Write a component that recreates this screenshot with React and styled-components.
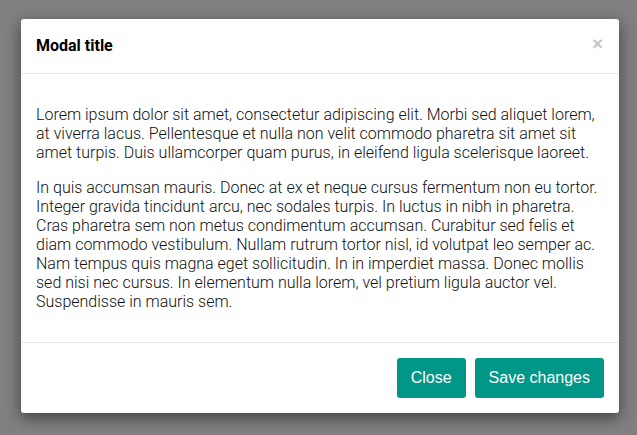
import React from "react";
import styled, { createGlobalStyle } from "styled-components";

const Global = createGlobalStyle`
  html, body { margin: 0; padding: 0; }
  body {
    background: #808080;
    font-family: Roboto, "Noto Sans", sans-serif;
    height: 435px;
    overflow: hidden;
  }
`;

const Backdrop = styled.div`
  display: flex;
  align-items: flex-start;
  padding: 19px 0 0 21px;
`;

const Modal = styled.div`
  width: 598px;
  background: #fff;
  border-radius: 3px;
  box-shadow: 0 5px 15px rgba(0, 0, 0, 0.5);
  display: flex;
  flex-direction: column;
`;

const Header = styled.div`
  display: flex;
  align-items: flex-start;
  justify-content: space-between;
  padding: 15px;
  border-bottom: 1px solid #e5e5e5;
`;

const Title = styled.h4`
  margin: 0;
  font-family: Roboto, sans-serif;
  font-size: 16px;
  font-weight: 700;
  line-height: 24px;
  color: #000;
`;

const CloseX = styled.button`
  border: 0;
  background: none;
  padding: 0;
  margin: 0 1px 0 0;
  font-family: "Liberation Sans", Arial, sans-serif;
  font-size: 19px;
  font-weight: 700;
  line-height: 20px;
  color: #c6c6c6;
  cursor: pointer;
`;

const Body = styled.div`
  padding: 31px 15px;
`;

const Para = styled.p`
  margin: 0 0 16px;
  font-family: Roboto, sans-serif;
  font-size: 16px;
  font-weight: 300;
  line-height: 19px;
  color: #111;
  &:last-child { margin-bottom: 0; }
`;

const Footer = styled.div`
  display: flex;
  justify-content: flex-end;
  gap: 9px;
  padding: 15px;
  border-top: 1px solid #e5e5e5;
`;

const Button = styled.button`
  height: 40px;
  padding: 0 14px;
  border: 0;
  border-radius: 3px;
  background: #009688;
  color: #fff;
  font-family: "Liberation Sans", Arial, sans-serif;
  font-size: 16px;
  cursor: pointer;
`;

export default function App() {
  return (
    <>
      <Global />
      <Backdrop>
        <Modal>
          <Header>
            <Title>Modal title</Title>
            <CloseX aria-label="Close">×</CloseX>
          </Header>
          <Body>
            <Para>
              Lorem ipsum dolor sit amet, consectetur adipiscing elit. Morbi sed aliquet lorem, at viverra lacus. Pellentesque et nulla non velit commodo pharetra sit amet sit amet turpis. Duis ullamcorper quam purus, in eleifend ligula scelerisque laoreet.
            </Para>
            <Para>
              In quis accumsan mauris. Donec at ex et neque cursus fermentum non eu tortor. Integer gravida tincidunt arcu, nec sodales turpis. In luctus in nibh in pharetra. Cras pharetra sem non metus condimentum accumsan. Curabitur sed felis et diam commodo vestibulum. Nullam rutrum tortor nisl, id volutpat leo semper ac. Nam tempus quis magna eget sollicitudin. In in imperdiet massa. Donec mollis sed nisi nec cursus. In elementum nulla lorem, vel pretium ligula auctor vel. Suspendisse in mauris sem.
            </Para>
          </Body>
          <Footer>
            <Button>Close</Button>
            <Button>Save changes</Button>
          </Footer>
        </Modal>
      </Backdrop>
    </>
  );
}
